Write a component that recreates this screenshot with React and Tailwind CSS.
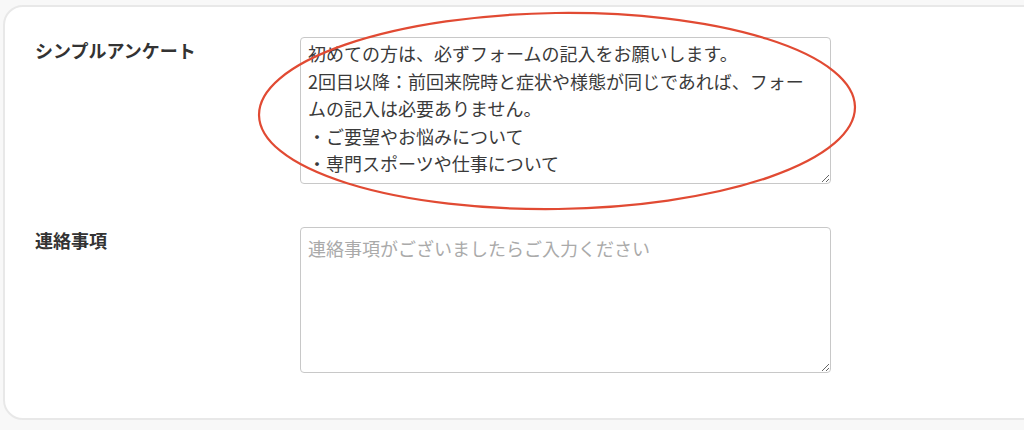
import { useEffect, useRef } from 'react'

const FONT = '"Noto Sans CJK JP", "Noto Sans", sans-serif'

function FormRow({ label, children, className = '' }) {
  return (
    <div className={`flex items-start ${className}`}>
      <div className="w-[265px] shrink-0 text-[18px] leading-[27px] font-bold text-[#333]">{label}</div>
      {children}
    </div>
  )
}

export default function App() {
  const surveyRef = useRef(null)

  useEffect(() => {
    if (surveyRef.current) surveyRef.current.scrollTop = 5
  }, [])

  const survey =
    '初めての方は、必ずフォームの記入をお願いします。\n2回目以降：前回来院時と症状や様態が同じであれば、フォームの記入は必要ありません。\n・ご要望やお悩みについて\n・専門スポーツや仕事について\n・既往歴について'

  return (
    <div className="relative w-[1024px] h-[430px] overflow-hidden bg-[#f8f8f8]" style={{ fontFamily: FONT }}>
      <div className="ml-[3px] mt-[5px] w-[1060px] h-[415px] rounded-[20px] border-2 border-[#e8e8e8] bg-white pl-[30px] pt-[30px]">
        <FormRow label="シンプルアンケート">
          <textarea
            ref={surveyRef}
            readOnly
            defaultValue={survey}
            className="w-[531px] h-[147px] overflow-hidden rounded-[4px] border border-[#c8c8c8] pl-[7px] pr-[16px] py-[7px] text-[18px] leading-[27.5px] text-[#3a3a3a] outline-none [text-spacing-trim:space-all]"
            style={{ fontFamily: FONT }}
          />
        </FormRow>
        <FormRow label="連絡事項" className="mt-[43px]">
          <textarea
            placeholder="連絡事項がございましたらご入力ください"
            className="w-[531px] h-[146px] overflow-hidden rounded-[4px] border border-[#c8c8c8] pl-[7px] pr-[6px] py-[7px] text-[18px] leading-[27.5px] text-[#3a3a3a] placeholder:text-[#aaa] outline-none"
            style={{ fontFamily: FONT }}
          />
        </FormRow>
      </div>
      <svg className="absolute left-0 top-0 pointer-events-none" width="1024" height="430" viewBox="0 0 1024 430">
        <ellipse cx="557" cy="111" rx="298" ry="98" fill="none" stroke="#e14a33" strokeWidth="2.2" transform="rotate(-0.8 557 111)" />
      </svg>
    </div>
  )
}
